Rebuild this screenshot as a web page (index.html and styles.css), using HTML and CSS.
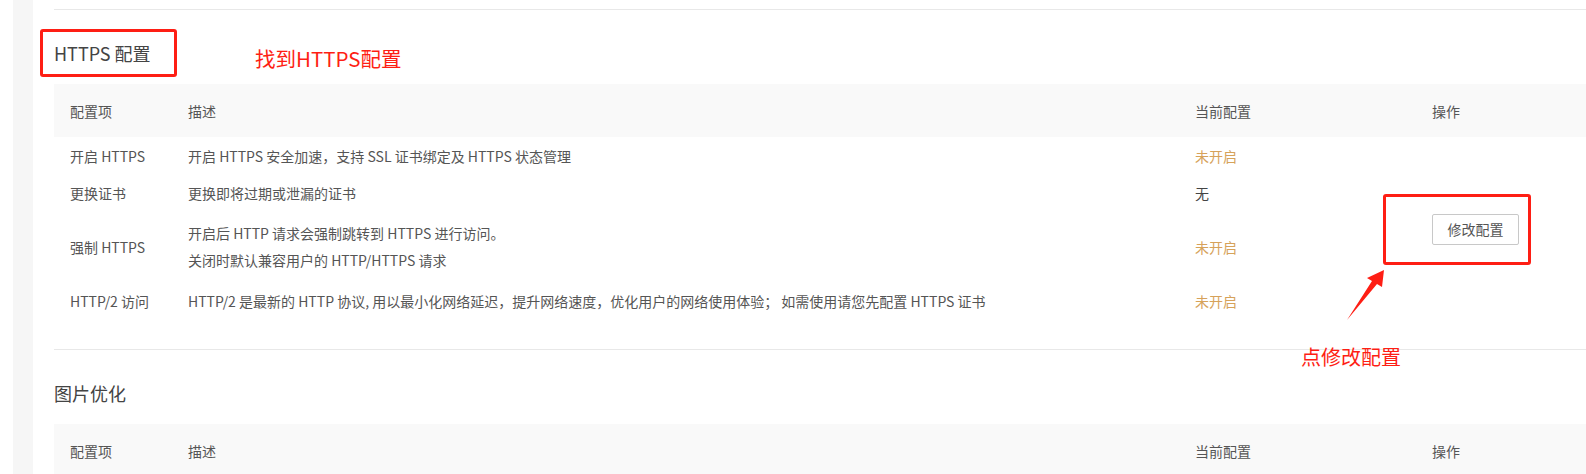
FILE: index.html
```html
<!DOCTYPE html>
<html lang="zh-CN">
<head>
    <meta charset="UTF-8">
    <meta name="viewport" content="width=device-width, initial-scale=1.0">
    <title>HTTPS 配置</title>
    <link rel="stylesheet" href="styles.css">
</head>
<body>

    <div class="page">
        <!-- Left edge of the console -->
        <div class="gutter"></div>
        <div class="side"></div>

        <div class="main">

            <!-- HTTPS section -->
            <div class="section">
                <h3 class="section-title">HTTPS 配置</h3>

                <table class="config-table">
                    <colgroup>
                        <col class="col-name">
                        <col class="col-desc">
                        <col class="col-value">
                        <col class="col-action">
                    </colgroup>
                    <thead>
                        <tr>
                            <th>配置项</th>
                            <th>描述</th>
                            <th>当前配置</th>
                            <th>操作</th>
                        </tr>
                    </thead>
                    <tbody>
                        <tr class="first">
                            <td>开启 HTTPS</td>
                            <td>开启 HTTPS 安全加速，支持 SSL 证书绑定及 HTTPS 状态管理</td>
                            <td class="off">未开启</td>
                            <td class="action" rowspan="4">
                                <button class="button">修改配置</button>
                            </td>
                        </tr>
                        <tr>
                            <td>更换证书</td>
                            <td>更换即将过期或泄漏的证书</td>
                            <td class="none">无</td>
                        </tr>
                        <tr class="tall">
                            <td>强制 HTTPS</td>
                            <td>
                                <div>开启后 HTTP 请求会强制跳转到 HTTPS 进行访问。</div>
                                <div class="second-line">关闭时默认兼容用户的 HTTP/HTTPS 请求</div>
                            </td>
                            <td class="off">未开启</td>
                        </tr>
                        <tr>
                            <td>HTTP/2 访问</td>
                            <td>HTTP/2 是最新的 HTTP 协议, 用以最小化网络延迟，提升网络速度，优化用户的网络使用体验； 如需使用请您先配置 HTTPS 证书</td>
                            <td class="off">未开启</td>
                        </tr>
                    </tbody>
                </table>
            </div>

            <!-- Image section -->
            <div class="section">
                <h3 class="section-title">图片优化</h3>

                <table class="config-table">
                    <colgroup>
                        <col class="col-name">
                        <col class="col-desc">
                        <col class="col-value">
                        <col class="col-action">
                    </colgroup>
                    <thead>
                        <tr>
                            <th>配置项</th>
                            <th>描述</th>
                            <th>当前配置</th>
                            <th>操作</th>
                        </tr>
                    </thead>
                </table>
            </div>
        </div>
    </div>

    <!-- Screenshot annotations -->
    <div class="mark mark-title"></div>
    <div class="note note-title">找到HTTPS配置</div>
    <div class="mark mark-button"></div>
    <svg class="arrow" width="50" height="60" viewBox="0 0 50 60">
        <polygon points="44,5 27,13 32,16 7,55 37,19 42,22" fill="#fe1e14"/>
    </svg>
    <div class="note note-button">点修改配置</div>

</body>
</html>
```

FILE: styles.css
```css
body {
    margin: 0;
    background-color: #fff;
    font-family: "Noto Sans CJK SC", sans-serif;
    color: #555;
    font-size: 14px;
    overflow: hidden;
}

.page {
    display: flex;
    width: 1586px;
    height: 474px;
}

.gutter {
    width: 13px;
}

.side {
    width: 20px;
    background-color: #f6f6f6;
}

.main {
    flex: 1;
    padding-left: 21px;
    padding-top: 9px;
}

.section {
    border-top: 1px solid #e8e8e8;
    padding-bottom: 29px;
}

.section-title {
    margin: 31px 0 19px;
    font-size: 18px;
    line-height: 24px;
    font-weight: normal;
    color: #444;
}

.config-table {
    width: 100%;
    table-layout: fixed;
    border-collapse: collapse;
}

.col-name {
    width: 118px;
}

.col-desc {
    width: 1007px;
}

.col-value {
    width: 237px;
}

.config-table th {
    background-color: #f9f9f9;
    height: 53px;
    padding: 0 16px;
    text-align: left;
    font-weight: normal;
    line-height: 20px;
    color: #555;
}

.config-table td {
    padding: 9px 16px;
    line-height: 20px;
    vertical-align: middle;
    white-space: nowrap;
}

.config-table tr.first td {
    padding-bottom: 8px;
}

.config-table tr.tall td {
    padding-top: 11px;
    padding-bottom: 12px;
}

.config-table td.action {
    padding-top: 9px;
    padding-bottom: 9px;
}

.second-line {
    margin-top: 7px;
}

.off {
    color: #d6a25a;
}

.none {
    color: #444;
}

.button {
    width: 87px;
    height: 31px;
    background-color: #fff;
    border: 1px solid #c8c8c8;
    border-radius: 2px;
    font-family: "Noto Sans CJK SC", sans-serif;
    font-size: 14px;
    color: #555;
    padding: 0;
    cursor: pointer;
}

/* red markup drawn over the screenshot */
.mark {
    position: absolute;
    border: 3px solid #fe1e14;
    border-radius: 3px;
    box-sizing: border-box;
}

.mark-title {
    left: 40px;
    top: 29px;
    width: 137px;
    height: 48px;
}

.mark-button {
    left: 1383px;
    top: 194px;
    width: 148px;
    height: 71px;
}

.note {
    position: absolute;
    color: #fe1e14;
    font-size: 20px;
    line-height: 24px;
}

.note-title {
    left: 255px;
    top: 46px;
    font-size: 20.5px;
}

.note-button {
    left: 1301px;
    top: 345px;
}

.arrow {
    position: absolute;
    left: 1340px;
    top: 265px;
}
```
